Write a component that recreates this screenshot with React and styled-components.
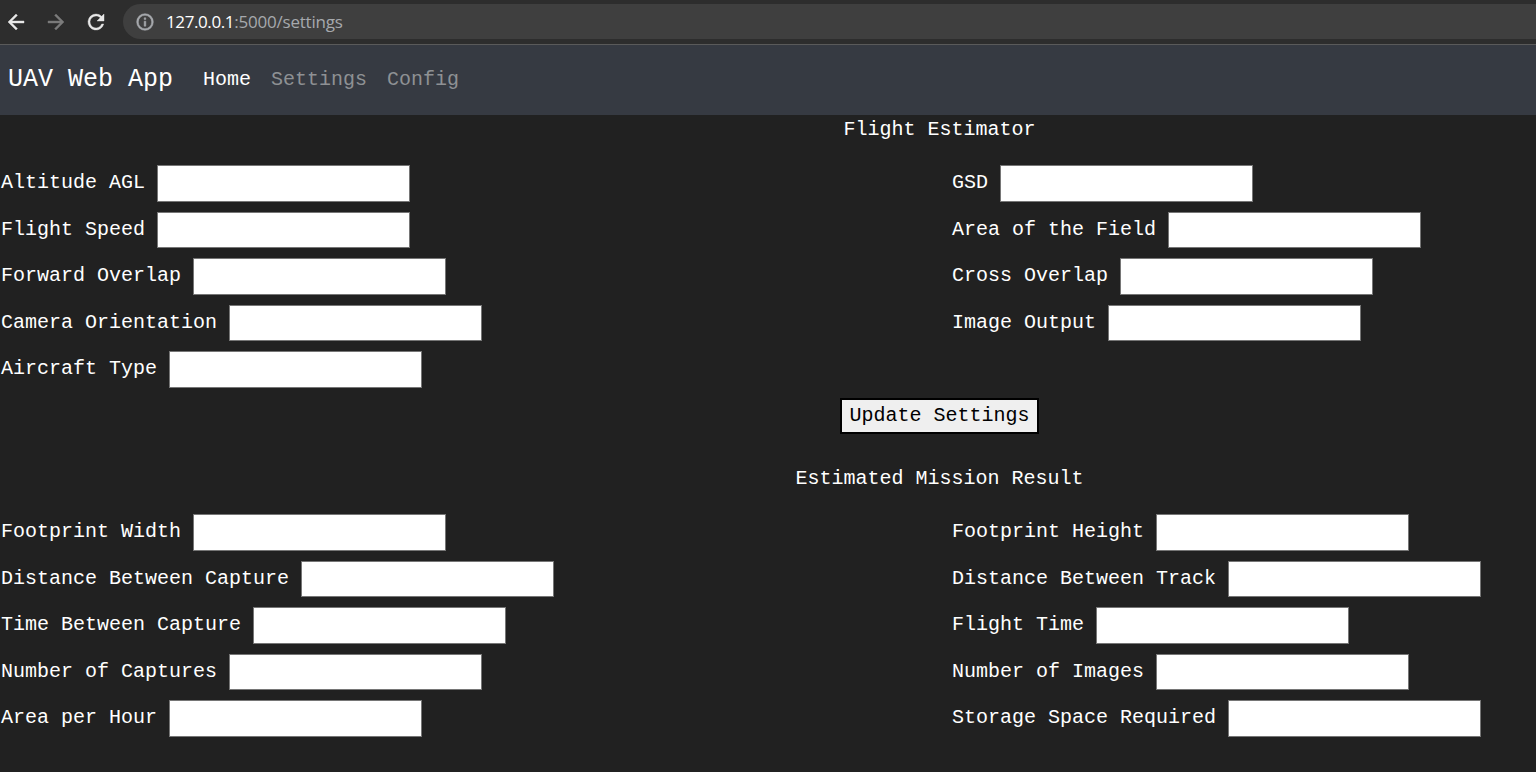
import React from "react";
import styled, { createGlobalStyle } from "styled-components";

const GlobalStyle = createGlobalStyle`
  *, *::before, *::after { box-sizing: border-box; }
  html, body { margin: 0; background: #212121; }
  body {
    height: 772px;
    overflow: hidden;
    color: #fff;
    font: 20px/26px "Liberation Mono", "Courier New", monospace;
  }
`;

const Toolbar = styled.header`
  display: flex;
  align-items: flex-start;
  height: 45px;
  padding-top: 4px;
  background: #2d2d2d;
  border-bottom: 1px solid #5a5a5a;
`;

const ToolButtons = styled.div`
  display: flex;
  align-items: center;
  gap: 16px;
  height: 35px;
  padding: 0 15px 0 4px;
`;

const ToolIcon = styled.svg`
  display: block;
  width: 24px;
  height: 24px;
  fill: ${(p) => (p.$dim ? "#7b7b7b" : "#e8e8e8")};
  stroke: ${(p) => (p.$dim ? "#7b7b7b" : "#e8e8e8")};
  stroke-width: 0.4px;
`;

const AddressBar = styled.div`
  display: flex;
  flex: 1;
  align-items: center;
  height: 35px;
  padding-left: 12px;
  background: #3f3f3f;
  border-radius: 18px 0 0 18px;
  color: #a6a9ad;
  font: 17px/35px "Open Sans", "Noto Sans", sans-serif;
  letter-spacing: -0.2px;
`;

const InfoIcon = styled.svg`
  width: 20px;
  height: 20px;
  margin-right: 11px;
  fill: #a6a9ad;
  stroke: #a6a9ad;
  stroke-width: 0.6px;
`;

const Host = styled.span`
  color: #fff;
  letter-spacing: -0.4px;
`;

const Navbar = styled.nav`
  display: flex;
  align-items: center;
  height: 70px;
  padding: 0 8px;
  background: #363a42;
`;

const Brand = styled.span`
  margin-right: 30px;
  font-size: 25px;
  line-height: 36px;
`;

const NavLinks = styled.div`
  display: flex;
  gap: 20px;
`;

const NavLink = styled.a`
  color: ${(p) => (p.$active ? "#fff" : "#8e9194")};
  text-decoration: none;
`;

const Section = styled.section`
  padding-bottom: ${(p) => p.$bottom || 0}px;
`;

const Heading = styled.h1`
  height: 45px;
  margin: 0;
  padding: 2px 0 0 343px;
  font-size: 20px;
  font-weight: 400;
  text-align: center;
`;

const Fields = styled.div`
  display: grid;
  grid-template-columns: 951px 1fr;
  grid-auto-rows: 46.5px;
  padding: 5.3px 0 0 1px;
`;

const Field = styled.label`
  display: flex;
  align-items: flex-start;
  gap: 12px;
  line-height: 36px;
`;

const Input = styled.input`
  width: 253px;
  height: 36.5px;
  padding: 1px 2px;
  background: #fff;
  border: 1px solid #767676;
  border-radius: 0;
  font: inherit;
`;

const ButtonRow = styled.div`
  display: flex;
  justify-content: center;
  padding-left: 343px;
`;

const UpdateButton = styled.button`
  width: 199px;
  height: 36px;
  padding: 0;
  background: #efefef;
  border: 2px solid #000;
  color: #000;
  font: inherit;
`;

const estimator = [
  "Altitude AGL", "GSD",
  "Flight Speed", "Area of the Field",
  "Forward Overlap", "Cross Overlap",
  "Camera Orientation", "Image Output",
  "Aircraft Type",
];

const results = [
  "Footprint Width", "Footprint Height",
  "Distance Between Capture", "Distance Between Track",
  "Time Between Capture", "Flight Time",
  "Number of Captures", "Number of Images",
  "Area per Hour", "Storage Space Required",
];

function FieldGrid({ labels }) {
  return (
    <Fields>
      {labels.map((label) => (
        <Field key={label}>
          {label}
          <Input type="text" />
        </Field>
      ))}
    </Fields>
  );
}

export default function App() {
  return (
    <>
      <GlobalStyle />
      <Toolbar>
        <ToolButtons>
          <ToolIcon viewBox="0 0 24 24">
            <path d="M20 11H7.83l5.59-5.59L12 4l-8 8 8 8 1.41-1.41L7.83 13H20z" />
          </ToolIcon>
          <ToolIcon viewBox="0 0 24 24" $dim>
            <path d="M12 4l-1.41 1.41L16.17 11H4v2h12.17l-5.58 5.59L12 20l8-8z" />
          </ToolIcon>
          <ToolIcon viewBox="0 0 24 24">
            <path d="M17.65 6.35A7.96 7.96 0 0 0 12 4a8 8 0 1 0 7.73 10h-2.08A6 6 0 1 1 12 6c1.66 0 3.14.69 4.22 1.78L13 11h7V4z" />
          </ToolIcon>
        </ToolButtons>
        <AddressBar>
          <InfoIcon viewBox="0 0 24 24">
            <path d="M11 7h2v2h-2zm0 4h2v6h-2zm1-9a10 10 0 1 0 0 20 10 10 0 0 0 0-20zm0 18a8 8 0 1 1 0-16 8 8 0 0 1 0 16z" />
          </InfoIcon>
          <Host>127.0.0.1</Host>:5000/settings
        </AddressBar>
      </Toolbar>
      <Navbar>
        <Brand>UAV Web App</Brand>
        <NavLinks>
          <NavLink $active>Home</NavLink>
          <NavLink>Settings</NavLink>
          <NavLink>Config</NavLink>
        </NavLinks>
      </Navbar>
      <main>
        <Section $bottom={30}>
          <Heading>Flight Estimator</Heading>
          <FieldGrid labels={estimator} />
          <ButtonRow>
            <UpdateButton type="button">Update Settings</UpdateButton>
          </ButtonRow>
        </Section>
        <Section>
          <Heading>Estimated Mission Result</Heading>
          <FieldGrid labels={results} />
        </Section>
      </main>
    </>
  );
}
